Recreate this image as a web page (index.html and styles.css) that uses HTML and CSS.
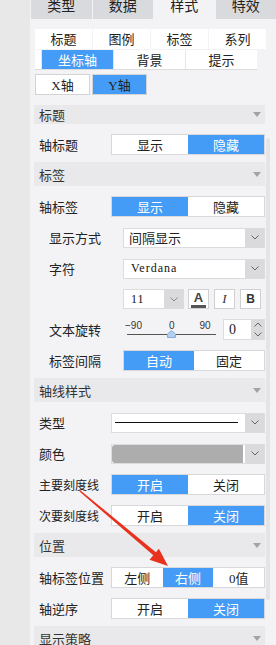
FILE: index.html
```html
<!doctype html>
<html>
<head>
<meta charset="utf-8">
<link rel="stylesheet" href="styles.css">
</head>
<body>
	<div class="side"></div>
	<div class="panel">
		<div class="tabs">
			<div class="tab">类型</div>
			<div class="tab">数据</div>
			<div class="tab on">样式</div>
			<div class="tab">特效</div>
		</div>
		<div class="subnav">
			<div class="sub-row">
				<div class="sub-item">标题</div>
				<div class="sub-item">图例</div>
				<div class="sub-item">标签</div>
				<div class="sub-item">系列</div>
			</div>
			<div class="sub-row2">
				<div class="sub-item2 on">坐标轴</div>
				<div class="sub-item2">背景</div>
				<div class="sub-item2">提示</div>
			</div>
			<div class="axis">
				<div class="axis-btn"><span class="latin">X</span>轴</div>
				<div class="axis-btn on"><span class="latin">Y</span>轴</div>
			</div>
		</div>

		<div class="content">
			<div class="head first">标题<i class="caret"></i></div>
			<div class="body">
				<div class="row">
					<span class="label">轴标题</span>
					<div class="toggle"><div>显示</div><div class="on">隐藏</div></div>
				</div>
			</div>

			<div class="head">标签<i class="caret"></i></div>
			<div class="body">
				<div class="row">
					<span class="label">轴标签</span>
					<div class="toggle"><div class="on">显示</div><div>隐藏</div></div>
				</div>
				<div class="row inner">
					<span class="label">显示方式</span>
					<div class="select">
						<div class="val">间隔显示</div>
						<div class="btn"><svg width="8" height="5"><path d="M.5.5l3.5 3.5 3.5-3.5" fill="none" stroke="#666"/></svg></div>
					</div>
				</div>
				<div class="row inner">
					<span class="label">字符</span>
					<div class="select">
						<div class="val font">Verdana</div>
						<div class="btn"><svg width="8" height="5"><path d="M.5.5l3.5 3.5 3.5-3.5" fill="none" stroke="#666"/></svg></div>
					</div>
				</div>
				<div class="row inner short">
					<span class="label"></span>
					<div class="select fsize">
						<div class="val font">11</div>
						<div class="btn"><svg width="8" height="5"><path d="M.5.5l3.5 3.5 3.5-3.5" fill="none" stroke="#888"/></svg></div>
					</div>
					<div class="fbtn fa"><b>A</b><i class="bar"></i></div>
					<div class="fbtn fi">I</div>
					<div class="fbtn fb">B</div>
				</div>
				<div class="row inner">
					<span class="label">文本旋转</span>
					<div class="slider">
						<div class="ticks"><span>−90</span><span class="t0">0</span><span class="t90">90</span></div>
						<div class="line"></div>
						<svg class="thumb" width="9" height="8"><path d="M4.5.5L8.5 4v3.5h-8V4z" fill="#b3cff0" stroke="#86aedb"/></svg>
					</div>
					<div class="num">
						<div class="v">0</div>
						<div class="spin">
							<svg width="8" height="5"><path d="M.5 4.5L4 1l3.5 3.5" fill="none" stroke="#666"/></svg>
							<svg width="8" height="5"><path d="M.5.5L4 4l3.5-3.5" fill="none" stroke="#666"/></svg>
						</div>
					</div>
				</div>
				<div class="row inner">
					<span class="label">标签间隔</span>
					<div class="toggle"><div class="on">自动</div><div>固定</div></div>
				</div>
			</div>

			<div class="head">轴线样式<i class="caret"></i></div>
			<div class="body">
				<div class="row">
					<span class="label">类型</span>
					<div class="select">
						<div class="val"><div class="stroke"></div></div>
						<div class="btn"><svg width="8" height="5"><path d="M.5.5l3.5 3.5 3.5-3.5" fill="none" stroke="#666"/></svg></div>
					</div>
				</div>
				<div class="row">
					<span class="label">颜色</span>
					<div class="select color">
						<div class="val"></div>
						<div class="btn"><svg width="8" height="5"><path d="M.5.5l3.5 3.5 3.5-3.5" fill="none" stroke="#666"/></svg></div>
					</div>
				</div>
				<div class="row">
					<span class="label tight">主要刻度线</span>
					<div class="toggle"><div class="on">开启</div><div>关闭</div></div>
				</div>
				<div class="row">
					<span class="label tight">次要刻度线</span>
					<div class="toggle"><div>开启</div><div class="on">关闭</div></div>
				</div>
			</div>

			<div class="head">位置<i class="caret"></i></div>
			<div class="body">
				<div class="row">
					<span class="label">轴标签位置</span>
					<div class="toggle"><div>左侧</div><div class="on">右侧</div><div><span class="latin">0</span>值</div></div>
				</div>
				<div class="row">
					<span class="label">轴逆序</span>
					<div class="toggle"><div>开启</div><div class="on">关闭</div></div>
				</div>
			</div>

			<div class="head">显示策略<i class="caret"></i></div>
		</div>
		<div class="scroll"></div>
	</div>

	<svg class="arrow" width="276" height="645">
		<polygon points="79.5,491.6 80.5,490.4 156.5,552.7 153.9,555.8" fill="#e8321e"/>
		<polygon points="168,566 149.5,559.7 158.9,548.8" fill="#e8321e"/>
	</svg>
</body>
</html>
```

FILE: styles.css
```css
*{
	margin:0;
	padding:0;
	box-sizing:border-box;
}
body{
	width:276px;
	height:645px;
	overflow:hidden;
	display:flex;
	position:relative;
	background:#f3f3f6;
	font:13px/1 "Noto Sans CJK SC", sans-serif;
	color:#222;
}
.latin{
	font-family:"Liberation Serif", serif;
}
.side{
	width:30px;
	background:#e8e8e9;
}
.panel{
	flex:1;
	position:relative;
}

/* top tabs */
.tabs{
	display:flex;
	gap:1px;
	padding-left:1px;
	height:27px;
	margin-top:-8px;
}
.tab{
	flex:1;
	background:#d9dadd;
	text-align:center;
	line-height:27px;
	font-size:14px;
}
.tab.on{
	background:#f3f3f6;
}

/* second level nav */
.subnav{
	padding:10px 0 0 5px;
}
.sub-row{
	display:flex;
	gap:1px;
	width:231px;
}
.sub-item{
	flex:1;
	height:20px;
	line-height:20px;
	background:#fff;
	text-align:center;
}
.sub-row2{
	display:flex;
	width:222px;
	height:20px;
	margin-top:1px;
	padding-left:6px;
	background:#fff;
	border-bottom:1px solid #dcdcdc;
}
.sub-item2{
	width:72px;
	border-left:1px solid #e6e6e6;
	text-align:center;
	line-height:19px;
}
.sub-item2.on{
	background:#449cf6;
	color:#fff;
}
.axis{
	display:flex;
	gap:2px;
	margin-top:4px;
}
.axis-btn{
	width:55px;
	height:21px;
	border:1px solid #d3d3d6;
	background:#fff;
	text-align:center;
	line-height:19px;
}
.axis-btn.on{
	background:#449cf6;
}

/* sections */
.content{
	margin:10px 0 0 4px;
	width:231px;
}
.head{
	height:24px;
	background:#e9e9eb;
	display:flex;
	align-items:center;
	justify-content:space-between;
	padding:0 4px 0 5px;
	color:#333;
}
.head.first{
	height:19px;
}
.caret{
	border:4px solid transparent;
	border-top:5px solid #a3a3a3;
	border-bottom:0;
}
.body{
	display:flex;
	flex-direction:column;
	gap:10px;
	padding:10px 0 7px;
}
.row{
	display:flex;
	align-items:center;
	height:21px;
	padding-left:5px;
}
.row.short{
	height:20px;
}
.row .label{
	width:72px;
	flex:none;
}
.row .label.tight{
	font-size:12px;
}
.row.inner{
	padding-left:15px;
}
.row.inner .label{
	width:74px;
}

.toggle{
	flex:1;
	display:flex;
	height:21px;
	border:1px solid #d8d8db;
	background:#fff;
}
.toggle div{
	flex:1;
	text-align:center;
	line-height:19px;
}
.toggle .on{
	background:#449cf6;
	color:#fff;
}

.select{
	flex:1;
	display:flex;
	height:20px;
	border:1px solid #dcdcde;
	background:#fff;
}
.select .val{
	flex:1;
	padding-left:5px;
	line-height:18px;
	display:flex;
	align-items:center;
}
.select .btn{
	width:19px;
	background:#dadadc;
	display:flex;
	align-items:center;
	justify-content:center;
}
.val.font{
	font:12px "Liberation Serif", serif;
	letter-spacing:1px;
	padding-left:7px;
	color:#111;
}
.stroke{
	flex:1;
	height:1px;
	background:#111;
	margin:0 7px 0 -2px;
}
.select.color .val{
	background:#adadad;
	border-radius:3px 0 0 3px;
	margin-right:2px;
}
.fsize{
	flex:none;
	width:61px;
}
.fbtn{
	width:21px;
	height:20px;
	margin-left:5px;
	border:1px solid #d0d0d3;
	background:#fff;
	display:flex;
	flex-direction:column;
	align-items:center;
	justify-content:center;
	color:#333;
}
.fa{
	margin-left:4px;
	padding-top:2px;
}
.fa b{
	font:bold 13px/11px "Liberation Sans", sans-serif;
	color:#444;
}
.fa .bar{
	width:15px;
	height:3px;
	margin-top:2px;
	background:#555;
}
.fi{
	font:italic 13px "Liberation Serif", serif;
}
.fb{
	font:bold 12px "Liberation Sans", sans-serif;
}

.slider{
	width:95px;
	height:21px;
	position:relative;
}
.ticks{
	display:flex;
	padding:2px 0 0 2px;
	font:10px/10px "Liberation Sans", sans-serif;
	color:#333;
}
.ticks .t0{
	margin-left:27px;
}
.ticks .t90{
	margin-left:25px;
}
.line{
	height:1px;
	width:89px;
	margin:3px 0 0 4px;
	background:#555;
}
.thumb{
	position:absolute;
	left:44px;
	top:11px;
}
.num{
	width:42px;
	height:21px;
	margin-left:5px;
	border:1px solid #dcdcde;
	background:#fff;
	display:flex;
}
.num .v{
	flex:1;
	padding-left:5px;
	font:14px/19px "Liberation Serif", serif;
}
.spin{
	width:13px;
	background:#dadadc;
	display:flex;
	flex-direction:column;
	justify-content:space-around;
	align-items:center;
}

.scroll{
	position:absolute;
	left:236px;
	top:138px;
	width:4px;
	height:462px;
	border-radius:2px;
	background:#e4e4e7;
}
.arrow{
	position:absolute;
	top:0;
	left:0;
	pointer-events:none;
}
```
